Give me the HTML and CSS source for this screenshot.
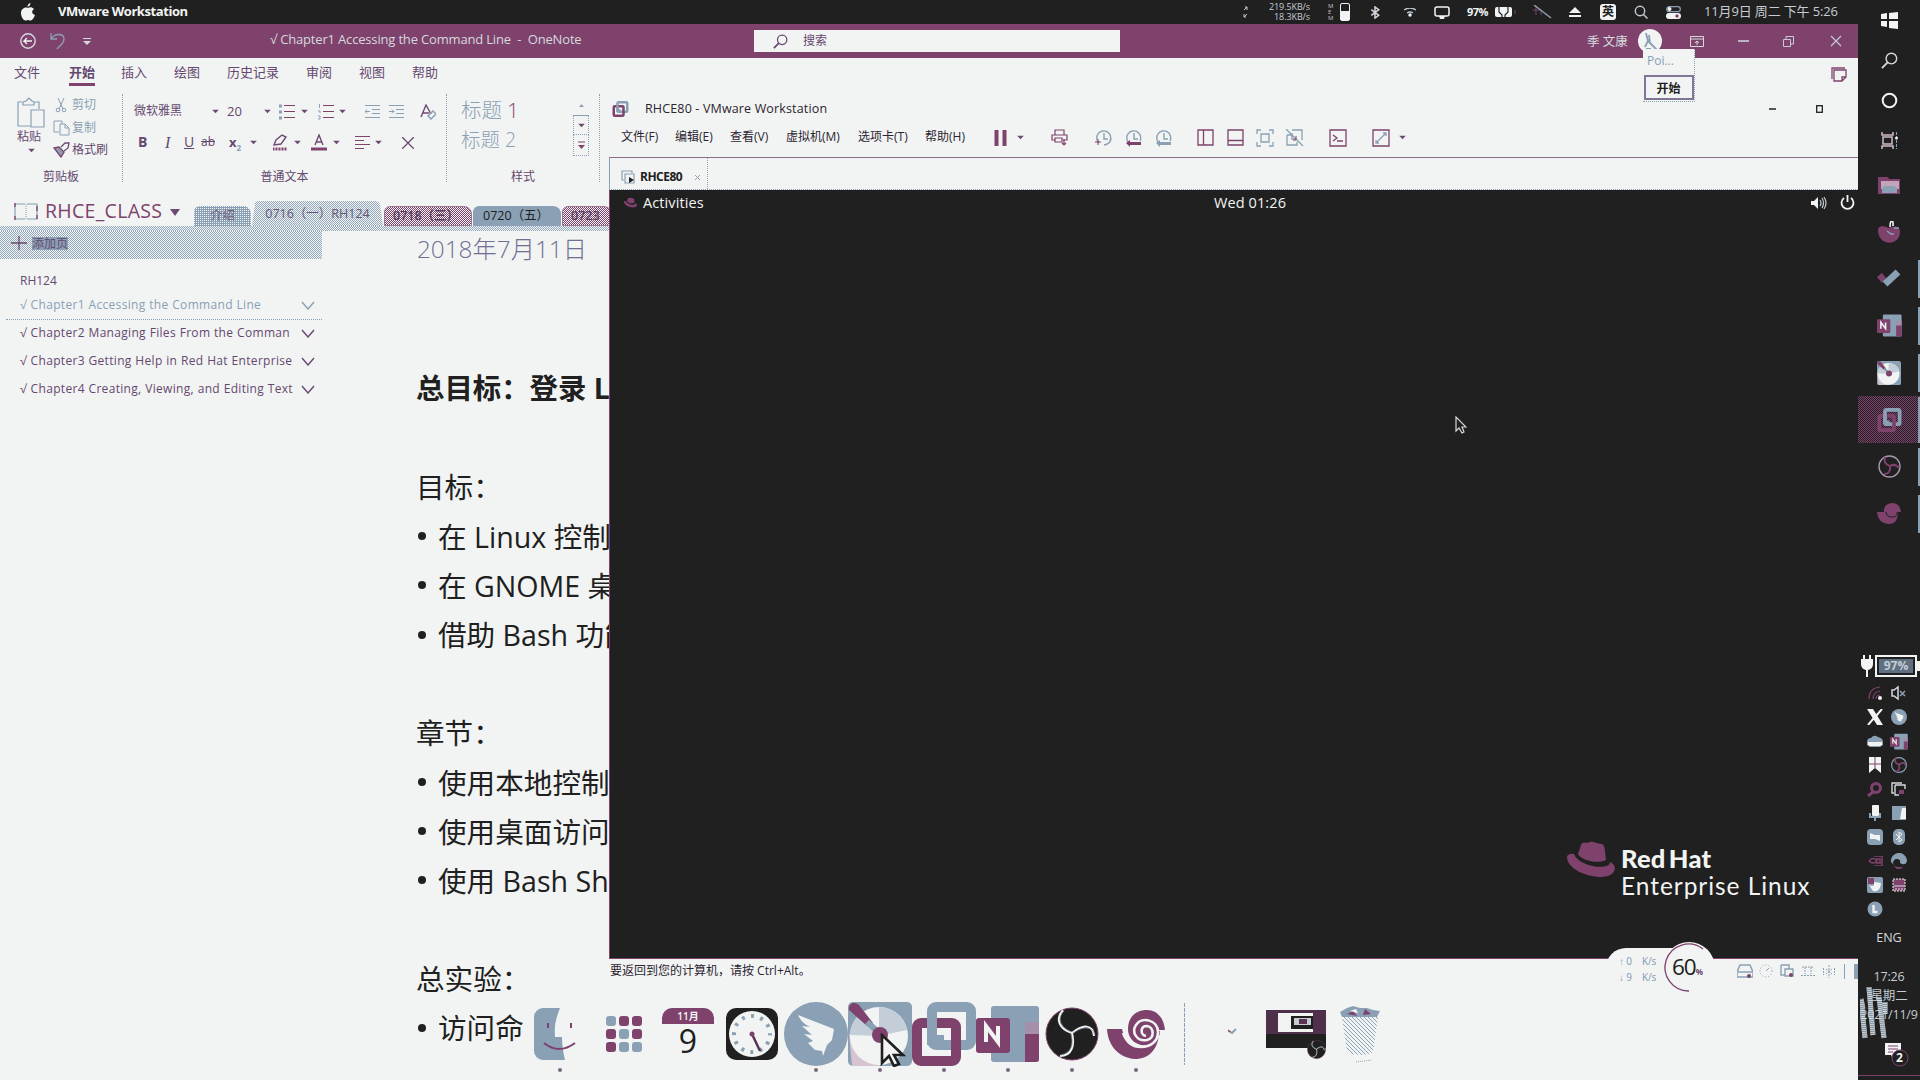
FILE: index.html
```html
<!DOCTYPE html>
<html lang="zh-CN">
<head>
<meta charset="utf-8">
<title>VMware Workstation</title>
<link rel="stylesheet" href="styles.css">
</head>
<body>
<svg class="defs" width="0" height="0">
  <defs>
    <symbol id="chev" viewBox="0 0 8 6"><path d="M0 1h8L4 5z" fill="#6c4a72"/></symbol>
    <symbol id="expand" viewBox="0 0 14 9"><path d="M1 1l6 7 6-7" fill="none" stroke="currentColor" stroke-width="1.4"/></symbol>
    <symbol id="vm" viewBox="0 0 64 64"><rect x="20" y="5" width="39" height="38" rx="4" fill="none" stroke="#8aa0b4" stroke-width="10"/><rect x="5" y="21" width="39" height="38" rx="4" fill="none" stroke="#7e426c" stroke-width="10"/><path d="M20 16v22h12" fill="none" stroke="#8aa0b4" stroke-width="10"/></symbol>
    <symbol id="obs" viewBox="0 0 54 54"><circle cx="27" cy="27" r="26" fill="#202020" stroke="#7e426c" stroke-width="1"/><path d="M18 3C10 12 14 22 27 26M49 29C48 17 38 17 27 26M15 49C27 49 30 38 27 26" fill="none" stroke="#f2f4f3" stroke-width="2"/><path d="M19 4C12 11 15 20 26 25M50 28C47 19 38 19 28 26M16 48C26 46 29 38 26 27" fill="none" stroke="#8aa0b4" stroke-width=".8"/></symbol>
    <symbol id="spiral" viewBox="0 0 60 50"><path d="M1 20h15c2 10 9 18 21 18 10 0 17-8 17-16l-1 0c0 18-10 28-24 28C13 49 2 37 1 20z" fill="#7e426c"/><path d="M22 20C22 7 31 1 41 1c10 0 17 8 18 20h-7c0 10-7 17-17 15-8-2-13-8-13-16z" fill="#7e426c"/><path d="M40 27c-6-1-6-10 1-10 7 1 8 12 0 14-10 2-16-8-11-15 6-9 22-5 22 7 0 10-8 15-17 15-9 0-15-6-18-14" fill="none" stroke="#f2f4f3" stroke-width="2.6"/></symbol>
    <symbol id="onenote" viewBox="0 0 64 58"><rect x="15" y="1" width="48" height="56" rx="3" fill="#8aa0b4"/><path d="M49 17h14v12H49z" fill="#a58fab"/><path d="M49 29h14v25a3 3 0 0 1-3 3H49z" fill="#7e426c"/><rect x="0" y="13" width="34" height="35" rx="3" fill="#7e426c"/><path d="M10 37V21l12 16V21" fill="none" stroke="#f2f4f3" stroke-width="4"/></symbol>
    <symbol id="disc" viewBox="0 0 64 64"><rect width="64" height="64" rx="5" fill="#8aa0b4"/><path d="M1 32h31v32H4z" fill="#d6c3d0"/><circle cx="31" cy="34" r="29" fill="#f2f4f3"/><path d="M31 34L31 5A29 29 0 0 1 59 28zM31 34L12 12A29 29 0 0 0 2 33z" fill="#c3ced8"/><path d="M1 8C0 1 7-1 11 3l14 18-6 3z" fill="#7e426c"/><path d="M19 20l10 9" stroke="#8aa0b4" stroke-width="6"/><circle cx="32" cy="33" r="8" fill="#7e426c"/></symbol>
    <symbol id="hat" viewBox="0 0 48 36"><path d="M11 13l3-9c1-4 5-1 9-3 4-1 6 2 12 2 3 1 3 7 4 16-7 4-25 1-28-6z" fill="#7e426c"/><path d="M7 13c-4-1-7 1-7 3 0 11 18 20 35 20 16-1 15-13 8-15 0 9-31 5-36-8z" fill="#7e426c"/></symbol>
    <symbol id="wing" viewBox="0 0 64 64"><circle cx="32" cy="32" r="32" fill="#8aa0b4"/><path d="M14 13l36 14-2 11-5 5-4 11-1-5-7-1-7-7 5-2-9-7 8 1-10-9 8 1c-6-3-10-7-12-12z" fill="#f2f4f3"/></symbol>
    <symbol id="bt" viewBox="0 0 10 14"><path d="M1 4l8 6-4 3V1l4 3-8 6" fill="none" stroke="currentColor" stroke-width="1.6"/></symbol>
    <symbol id="mag" viewBox="0 0 18 18"><circle cx="11" cy="7" r="5.6" fill="none" stroke="currentColor" stroke-width="1.5"/><path d="M7 11l-6 6" stroke="currentColor" stroke-width="2"/></symbol>
    <symbol id="clk" viewBox="0 0 18 18"><path d="M4 14a7 7 0 1 1 11-2M9 4v6h4" fill="none" stroke="#8aa0b4" stroke-width="1.4"/></symbol>
  </defs>
</svg>

<div class="desktop">
  <main class="screen">
    <header class="menubar">
      <svg width="14" height="18" viewBox="0 0 14 18"><path d="M9.500 0c0 2-1 3-3 4 0-2 1-3.500 3-4zM7 5c2-1 4-1 6 1-3 2-2 5 1 6-1 3-3 6-5 5.500-1.500-.7-2.500-.7-4 0C2 18 0 13 0 10c0-4 4-6.500 7-5z" fill="#f2f4f3"/></svg>
      <strong>VMware Workstation</strong>
      <svg width="8" height="12" viewBox="0 0 8 12"><path d="M2 4l3-3M3 1h2v3M5 8l-3 3M2 8v3h2" stroke="#c5ccd4" fill="none"/></svg>
      <div class="net"><span>219.5KB/s</span><span>18.3KB/s</span></div>
      <div class="mem"><i>M</i><i>E</i><i>M</i></div>
      <svg width="10" height="18"><rect x=".5" y=".5" width="9" height="17" rx="1.500" fill="none" stroke="#f2f4f3"/><rect x="1" y="8" width="8" height="9" fill="#f2f4f3"/></svg>
      <svg class="lt" width="10" height="13"><use href="#bt"/></svg>
      <svg width="12" height="9" viewBox="0 0 12 9"><path d="M0 2q6-4 12 0M3 5q3-2 6 0" stroke="#b9c3ce" stroke-width="1.300" fill="none"/><circle cx="6" cy="7" r="1.700" fill="#f2f4f3"/></svg>
      <svg width="16" height="13" viewBox="0 0 16 13"><rect x="1" y="1" width="14" height="9" rx="2" fill="none" stroke="#f2f4f3" stroke-width="1.500"/><path d="M5 10h6l-1 3H6z" fill="#f2f4f3"/></svg>
      <b class="pct">97%</b>
      <svg width="22" height="12" viewBox="0 0 22 12"><rect x="1" y="1" width="17" height="10" rx="2" fill="#f2f4f3"/><path d="M21 4v4" stroke="#7e426c"/><path d="M5 1v5l3 3v2M14 1v5l-3 3v2" stroke="#202020" stroke-width="1.200" fill="none"/></svg>
      <svg width="20" height="14" viewBox="0 0 20 14"><path d="M1 5h8v5M4 1v9" stroke="#7e426c" fill="none"/><path d="M2 0l17 13" stroke="#8aa0b4" stroke-width="1.500"/></svg>
      <svg width="12" height="10" viewBox="0 0 12 10"><path d="M6 0l6 6H0zM0 8h12v2H0z" fill="#f2f4f3"/></svg>
      <span class="ime">英</span>
      <svg width="14" height="14" viewBox="0 0 14 14"><circle cx="6" cy="6" r="4.700" fill="none" stroke="#c5ccd4" stroke-width="1.400"/><path d="M9.500 9.500l4 4" stroke="#c5ccd4" stroke-width="1.500"/></svg>
      <svg width="15" height="13" viewBox="0 0 15 13"><rect x=".7" y=".7" width="13.600" height="5" rx="2.500" fill="none" stroke="#8aa0b4" stroke-width="1.300"/><circle cx="3.500" cy="3" r="2" fill="#f2f4f3"/><rect y="7" width="15" height="6" rx="3" fill="#f2f4f3"/><circle cx="11" cy="10" r="1.700" fill="#7e426c"/></svg>
      <time>11月9日 周二 下午 5:26</time>
    </header>

    <section class="onenote">
      <div class="titlebar">
        <svg width="18" height="18" viewBox="0 0 18 18"><circle cx="9" cy="9" r="7.200" fill="none" stroke="#d5d9de" stroke-width="1.400"/><path d="M13 9H5l3-3M5 9l3 3" stroke="#f2f4f3" stroke-width="1.300" fill="none"/></svg>
        <svg width="16" height="18" viewBox="0 0 16 18"><path d="M1 1v6h6M1 7c4-6 13-6 13 0 0 5-4 6-7 10" fill="none" stroke="#8aa0b4" stroke-width="1.300"/></svg>
        <svg width="8" height="7" viewBox="0 0 8 7"><path d="M0 .5h8" stroke="#d5d9de"/><path d="M0 3h8L4 7z" fill="#d5d9de"/></svg>
        <span class="wtitle">√ Chapter1 Accessing the Command Line&nbsp; - &nbsp;OneNote</span>
        <div class="search"><svg width="15" height="15"><use href="#mag"/></svg>搜索</div>
        <span class="user">季 文康</span>
        <svg width="24" height="24" viewBox="0 0 24 24"><circle cx="12" cy="12" r="12" fill="#f2f4f3"/><path d="M8 4l2 8-3 6M11 6l1 8M10 12l9 9M8 20h5" stroke="#8aa0b4" stroke-width="1.800" fill="none"/></svg>
        <svg width="14" height="11" viewBox="0 0 14 11"><path d="M.5.500h13v10H.5zM0 3h14M7 9V5M5 7l2-2 2 2" stroke="#d5d9de" fill="none"/></svg>
        <svg width="11" height="2"><path d="M0 1h11" stroke="#d5d9de" stroke-width="1.500"/></svg>
        <svg width="11" height="11" viewBox="0 0 11 11"><path d="M.5 3.500h7v7h-7zM3 3V.5h7.500V8H8" stroke="#c5ccd4" fill="none"/></svg>
        <svg width="12" height="12" viewBox="0 0 12 12"><path d="M1 1l10 10M11 1L1 11" stroke="#c5ccd4" stroke-width="1.200"/></svg>
      </div>
      <nav class="rtabs">
        <span>文件</span><span class="on">开始</span><span>插入</span><span>绘图</span><span>历史记录</span><span>审阅</span><span>视图</span><span>帮助</span>
        <svg width="16" height="15" viewBox="0 0 16 15"><path d="M1 12V1h13M3 3h12v7l-4 4H3zM15 10h-4v4" stroke="#7e426c" fill="none" stroke-width="1.300"/></svg>
      </nav>
      <div class="ribbon">
        <div class="group clip">
          <div class="tools">
            <div class="paste">
              <svg width="28" height="31" viewBox="0 0 28 31"><path d="M5 5H1v24h12M22 12V5h-5M6 8V5l3-1 3-3 3 3 2 1v3zM14 13h13v17H14z" fill="none" stroke="#8aa0b4" stroke-width="1.200"/></svg>
              <span>粘贴</span><svg width="7" height="5"><use href="#chev"/></svg>
            </div>
            <div class="cliplist">
              <span class="off"><svg width="17" height="15" viewBox="0 0 17 15"><path d="M5 0l5 11M11 0L6 11" stroke="#8aa0b4"/><circle cx="5" cy="12" r="1.800" fill="none" stroke="#8aa0b4"/><circle cx="11" cy="12" r="1.800" fill="none" stroke="#8aa0b4"/></svg>剪切</span>
              <span class="off"><svg width="17" height="16" viewBox="0 0 17 16"><path d="M6 12H1V1h8v3M7 4h5l4 4v7H7zM12 4v4h4" stroke="#8aa0b4" fill="none"/></svg>复制</span>
              <span><svg width="17" height="16" viewBox="0 0 17 16"><path d="M1 6l5-1 5 5-3 5z" fill="#8aa0b4" stroke="#7e426c" stroke-width="1.400"/><path d="M8 5l4-4 4-0-1 5-4 3" fill="none" stroke="#6c4a72" stroke-width="1.300"/></svg>格式刷</span>
            </div>
          </div>
          <label>剪贴板</label>
        </div>
        <div class="group font">
          <div class="tools">
            <div class="frow one">
              <span>微软雅黑</span><svg width="7" height="5"><use href="#chev"/></svg><span class="size">20</span><svg width="7" height="5"><use href="#chev"/></svg>
              <svg width="16" height="16" viewBox="0 0 16 16"><path d="M0 2h3M0 8h3M0 14h3" stroke="#8aa0b4" stroke-width="3"/><path d="M5 1.500h11M5 7.500h11M5 13.500h11" stroke="#7e426c"/></svg><svg width="7" height="5"><use href="#chev"/></svg>
              <svg width="16" height="16" viewBox="0 0 16 16"><path d="M1.500 0v4M0 7h2v2M0 12h2v3H0" stroke="#8aa0b4" fill="none"/><path d="M5 1.500h11M5 7.500h11M5 13.500h11" stroke="#7e426c"/></svg><svg width="7" height="5"><use href="#chev"/></svg>
              <svg width="15" height="13" viewBox="0 0 15 13"><path d="M0 .5h15M7 4.500h8M7 8.500h8M0 12.500h15M5 6.500H0l2-2M0 6.500l2 2" stroke="#8aa0b4" fill="none"/></svg>
              <svg width="15" height="13" viewBox="0 0 15 13"><path d="M0 .5h15M7 4.500h8M7 8.500h8M0 12.500h15M0 6.500h5l-2-2M5 6.500l-2 2" stroke="#8aa0b4" fill="none"/></svg>
              <svg width="16" height="16" viewBox="0 0 16 16"><path d="M1 13L6 1l5 9M3 9h6" stroke="#6c4a72" stroke-width="1.400" fill="none"/><path d="M8 12l5-5 3 3-5 5z" fill="none" stroke="#8aa0b4" stroke-width="1.500"/></svg>
            </div>
            <div class="frow two">
              <b>B</b><i>I</i><u>U</u><s>ab</s><span class="sub">x<sub>2</sub></span><svg width="7" height="5"><use href="#chev"/></svg>
              <svg width="16" height="17" viewBox="0 0 16 17"><path d="M2 11l2-5 6-5 4 2-5 7z" fill="none" stroke="#6c4a72" stroke-width="1.400"/><path d="M1 15h14" stroke="#7e426c" stroke-width="3" stroke-dasharray="1 .5"/></svg><svg width="7" height="5"><use href="#chev"/></svg>
              <svg width="16" height="17" viewBox="0 0 16 17"><path d="M4 11L8 1l4 10M5 8h6" fill="none" stroke="#6c4a72" stroke-width="1.400"/><path d="M0 15h16" stroke="#7e426c" stroke-width="3"/></svg><svg width="7" height="5"><use href="#chev"/></svg>
              <svg width="15" height="14" viewBox="0 0 15 14"><path d="M0 .5h15M0 4.500h9M0 8.500h15M0 12.500h9" stroke="#7e426c"/></svg><svg width="7" height="5"><use href="#chev"/></svg>
              <svg width="12" height="12" viewBox="0 0 12 12"><path d="M0 0l12 12M12 0L0 12" stroke="#6c4a72" stroke-width="1.300"/></svg>
            </div>
          </div>
          <label>普通文本</label>
        </div>
        <div class="group styles">
          <div class="tools">
            <div class="names"><span>标题 <em>1</em></span><span class="h2">标题 2</span></div>
            <div class="scroller"><span><svg width="5" height="3" viewBox="0 0 5 3"><path d="M0 3l2.500-3L5 3" fill="#8aa0b4"/></svg></span><span><svg width="7" height="5"><use href="#chev"/></svg></span><span><svg width="7" height="8" viewBox="0 0 7 8"><path d="M0 1h7" stroke="#7e426c"/><path d="M0 4h7L3.500 8z" fill="#7e426c"/></svg></span></div>
          </div>
          <label>样式</label>
        </div>
      </div>
      <div class="notebook">
        <svg width="24" height="19" viewBox="0 0 24 19"><path d="M11 2H1v15h10M13 2h10v15H13" fill="none" stroke="#8aa0b4" stroke-width="1.200"/><path d="M1 1v4M23 4v5M23 13v4M1 14v4" stroke="#7e426c" stroke-width="1.300"/><path d="M12 2v16" stroke="#8aa0b4" stroke-dasharray="1 1"/></svg>
        <span class="nbname">RHCE_CLASS</span>
        <svg width="10" height="8" viewBox="0 0 10 8"><path d="M0 0h10L5 7z" fill="#6c4a72"/></svg>
        <div class="sections">
          <span class="s1">介绍</span><span class="s2">0716（一）RH124</span><span class="s3">0718（三）</span><span class="s4">0720（五）</span><span class="s5">0723</span>
        </div>
      </div>
      <div class="band"></div>
      <div class="body">
        <aside class="pages">
          <div class="addpage"><svg width="16" height="14" viewBox="0 0 16 14"><path d="M8 0v14M0 7h16" stroke="#6c4a72" stroke-width="1.300"/></svg><span>添加页</span></div>
          <h4>RH124</h4>
          <p class="sel"><span>√ Chapter1 Accessing the Command Line</span><svg width="14" height="9"><use href="#expand"/></svg></p>
          <p><span>√ Chapter2 Managing Files From the Comman</span><svg width="14" height="9"><use href="#expand"/></svg></p>
          <p><span>√ Chapter3 Getting Help in Red Hat Enterprise</span><svg width="14" height="9"><use href="#expand"/></svg></p>
          <p><span>√ Chapter4 Creating, Viewing, and Editing Text</span><svg width="14" height="9"><use href="#expand"/></svg></p>
        </aside>
        <article class="note">
          <div class="date">2018年7月11日</div>
          <h2>总目标：登录 L</h2>
          <p class="gap">目标：</p>
          <p class="li">在 Linux 控制</p>
          <p class="li">在 GNOME 桌</p>
          <p class="li">借助 Bash 功能</p>
          <p class="gap">章节：</p>
          <p class="li">使用本地控制</p>
          <p class="li">使用桌面访问</p>
          <p class="li">使用 Bash Sh</p>
          <p class="gap">总实验：</p>
          <p class="li">访问命</p>
        </article>
      </div>
    </section>

    <section class="vmware">
      <div class="vtitle">
        <svg width="17" height="16"><use href="#vm"/></svg><span>RHCE80 - VMware Workstation</span>
        <svg width="7" height="2"><path d="M0 1h7" stroke="#202020" stroke-width="1.500"/></svg>
        <svg width="7" height="8"><rect x=".7" y=".7" width="5.600" height="6.600" fill="none" stroke="#202020" stroke-width="1.300"/></svg>
      </div>
      <div class="vmenu">
        <span>文件(F)</span><span>编辑(E)</span><span>查看(V)</span><span>虚拟机(M)</span><span>选项卡(T)</span><span>帮助(H)</span>
        <svg width="13" height="16"><path d="M2.500 0v16M10.500 0v16" stroke="#7e426c" stroke-width="4"/></svg>
        <svg width="7" height="5"><use href="#chev"/></svg>
        <svg width="17" height="17" viewBox="0 0 17 17"><path d="M4 6V1h9v5M4 11H1V6h15v5h-4M4 9h7v4H4zM13 10v6M11 14l2 2 2-2" fill="none" stroke="#7e426c" stroke-width="1.200"/></svg>
        <svg width="18" height="18" viewBox="0 0 18 18"><use href="#clk" width="18" height="18"/><path d="M0 13h6M3 10v6" stroke="#7e426c"/><path d="M16 10q-1 5-7 6" stroke="#8aa0b4" fill="none" stroke-width="1.300"/></svg>
        <svg width="18" height="18" viewBox="0 0 18 18"><use href="#clk" width="18" height="18"/><path d="M1 14l4-3v2h11v3H5v2z" fill="#7e426c"/></svg>
        <svg width="18" height="18" viewBox="0 0 18 18"><use href="#clk" width="18" height="18"/><path d="M1 14l4-3v2h11v3H5v2z" fill="#8aa0b4"/></svg>
        <svg width="17" height="17"><path d="M1 1h15v15H1zM6.500 1v15" fill="none" stroke="#7e426c" stroke-width="1.300"/></svg>
        <svg width="17" height="17"><path d="M1 1h15v15H1zM1 11.500h15" fill="none" stroke="#7e426c" stroke-width="1.300"/></svg>
        <svg width="18" height="18"><path d="M1 5V1h4M13 1h4v4M17 13v4h-4M5 17H1v-4M5 5h8v8H5z" fill="none" stroke="#8aa0b4" stroke-width="1.300"/></svg>
        <svg width="18" height="18"><path d="M1 6h5M1 6v10h10v-3M6 1h10v10M0 0l17 17M6 4v6h4" fill="none" stroke="#8aa0b4" stroke-width="1.300"/><path d="M10 7v4H7" stroke="#7e426c" fill="none"/></svg>
        <svg width="18" height="18"><path d="M1 1h16v16H1zM4 6l4 3-4 3M8 12h6" fill="none" stroke="#7e426c" stroke-width="1.300"/></svg>
        <svg width="18" height="18"><path d="M1 1h16v16H1z" fill="none" stroke="#7e426c" stroke-width="1.300"/><path d="M4 14L14 4M11 4h3v3M4 11v3h3" fill="none" stroke="#8aa0b4" stroke-width="1.300"/></svg>
        <svg width="7" height="5"><use href="#chev"/></svg>
      </div>
      <div class="vtabs"><div class="vtab"><svg width="14" height="14" viewBox="0 0 14 14"><path d="M3 10H1V1h10v2M4 4h9v9H4z" fill="none" stroke="#8aa0b4" stroke-width="1.200"/><path d="M8 7l5 3-5 3z" fill="#202020"/></svg><b>RHCE80</b><svg width="7" height="7"><path d="M1 1l5 5M6 1L1 6" stroke="#8aa0b4"/></svg></div></div>
      <div class="guest">
        <div class="gnome">
          <svg width="13" height="11"><use href="#hat"/></svg><span>Activities</span><span class="when">Wed 01:26</span>
          <svg width="16" height="14" viewBox="0 0 16 14"><path d="M0 5h3l4-4v12L3 9H0z" fill="#f2f4f3"/><path d="M9 4q2 3 0 6M11 2q3 5 0 10M13 1q4 6 0 12" fill="none" stroke="#c5ccd4" stroke-width="1.200"/></svg>
          <svg width="15" height="15" viewBox="0 0 15 15"><path d="M4 3a6 6 0 1 0 7 0M7.500 0v7" fill="none" stroke="#f2f4f3" stroke-width="1.800"/></svg>
        </div>
        <svg class="pointer" width="12" height="18" viewBox="0 0 12 18"><path d="M1 1v14l3-3 3 5 2-1-2-5h4z" fill="#202020" stroke="#d5d9de" stroke-width="1.200"/></svg>
        <div class="rhel"><svg width="48" height="36"><use href="#hat"/></svg><div><b>Red Hat</b><span>Enterprise Linux</span></div></div>
      </div>
      <div class="vstatus">
        <span>要返回到您的计算机，请按 Ctrl+Alt。</span>
        <svg width="16" height="14" viewBox="0 0 16 14"><path d="M3 1h10l3 7v5H0V8zM1 8h14" fill="none" stroke="#8aa0b4" stroke-width="1.500"/><circle cx="12" cy="12" r="2" fill="#7e426c"/></svg>
        <svg width="14" height="14"><circle cx="7" cy="7" r="6" fill="none" stroke="#8aa0b4" stroke-dasharray="1 2"/><path d="M7 7l3-3" stroke="#8aa0b4"/></svg>
        <svg width="14" height="14"><path d="M1 1h8v4M1 1v10h4M5 5h8v7H5z" fill="none" stroke="#8aa0b4" stroke-width="1.400"/><circle cx="11" cy="11" r="2" fill="#7e426c"/></svg>
        <svg width="14" height="12"><path d="M1 2h12M4 2v7M10 2v7M0 10.500h14" fill="none" stroke="#8aa0b4" stroke-dasharray="2 1"/></svg>
        <svg width="12" height="13"><path d="M6 0v13M3 4l6 5M9 4L3 9M.5 3v7M11.500 3v7" stroke="#8aa0b4" stroke-dasharray="2 1"/></svg>
        <i></i><em></em>
      </div>
    </section>

    <div class="meter">
      <div class="rates"><span>↑ 0</span><span>K/s</span><span>↓ 9</span><span>K/s</span></div>
      <div class="gauge"><svg width="56" height="56"><circle cx="28" cy="28" r="26" fill="#f2f4f3"/><path d="M28 51A23.500 23.500 0 1 1 42 9" fill="none" stroke="#7e426c" stroke-width="1.300"/></svg><b>60<small>%</small></b></div>
    </div>

    <div class="popup"><span>Poi...</span><button>开始</button></div>

    <nav class="dock">
      <div class="app run"><svg width="46" height="52" viewBox="0 0 46 52"><path d="M9 0h17c-4 10-6 18-5 29h7c0 8 1 15 3 23H9a9 9 0 0 1-9-9V9a9 9 0 0 1 9-9z" fill="#8aa0b4"/><path d="M14 15v5M37 15v5" stroke="#7e426c" stroke-width="2"/><path d="M10 35q15 12 31 0" fill="none" stroke="#7e426c" stroke-width="2"/></svg></div>
      <div class="app"><div class="grid"><i></i><i class="p"></i><i class="p"></i><i class="p"></i><i></i><i class="p"></i><i class="p"></i><i></i><i></i></div></div>
      <div class="app"><div class="cal"><span>11月</span><b>9</b></div></div>
      <div class="app"><svg width="52" height="52" viewBox="0 0 52 52"><rect width="52" height="52" rx="10" fill="#202020"/><circle cx="26" cy="26" r="23" fill="#f2f4f3"/><circle cx="26" cy="26" r="18" fill="none" stroke="#8aa0b4" stroke-width="4" stroke-dasharray="3 6.425" stroke-dashoffset="1.500"/><path d="M26 26l8 17" stroke="#5a3552" stroke-width="2.500"/><circle cx="26" cy="26" r="2.500" fill="#7e426c"/></svg></div>
      <div class="app run"><svg width="64" height="64"><use href="#wing"/></svg></div>
      <div class="app run"><svg width="64" height="64"><use href="#disc"/></svg><svg class="cursor" width="26" height="34" viewBox="0 0 26 34"><path d="M2 2v28l7-7 5 10 5-2-5-9h9z" fill="#f2f4f3" stroke="#202020" stroke-width="2.600"/></svg></div>
      <div class="app run"><svg width="64" height="64"><use href="#vm"/></svg></div>
      <div class="app run"><svg width="64" height="58"><use href="#onenote"/></svg></div>
      <div class="app run"><svg width="54" height="54"><use href="#obs"/></svg></div>
      <div class="app run"><svg width="60" height="50"><use href="#spiral"/></svg></div>
      <div class="sep"></div>
      <svg class="tick" width="9" height="7" viewBox="0 0 9 7"><path d="M1 3l3 2 4-4" fill="none" stroke="#8aa0b4" stroke-width="2"/><path d="M0 2l2 2" stroke="#7e426c" stroke-width="1.500"/></svg>
      <svg width="60" height="49" viewBox="0 0 60 49"><rect width="60" height="38" fill="#4e304a"/><path d="M0 24h60v14H0z" fill="#202020"/><rect x="12" y="3" width="35" height="19" fill="#f2f4f3"/><rect x="25" y="6" width="22" height="13" fill="#202020"/><path d="M28 8h17v7H28z" fill="#c5ccd4"/><path d="M33 9h8v5h-8z" fill="#5a3552"/><use href="#obs" x="41" y="30" width="19" height="19"/></svg>
      <svg width="40" height="58" viewBox="0 0 40 58"><path d="M2 12l-2-5 7-4 6-2 7 2 7 0 6 2 7 1-3 6z" fill="#8aa0b4"/><path d="M7 9l6-3 4 5zM23 10l2-6 6 5zM12 1l4 3" fill="#7e426c"/><path d="M10 6l6-2 2 4z" fill="#f2f4f3"/><path d="M2 12h36l-5 35c-6 4-20 4-26 0z" fill="url(#weave)"/><path d="M16 57l16-2" stroke="#8aa0b4" stroke-dasharray="1 1"/><defs><pattern id="weave" width="4" height="4" patternUnits="userSpaceOnUse"><path d="M0 0h1v1H0zM2 2h1v1H2zM1 1h1v1H1zM3 3h1v1H3z" fill="#8aa0b4"/></pattern></defs></svg>
    </nav>
  </main>

  <aside class="taskbar">
    <div class="tb"><svg width="17" height="17" viewBox="0 0 17 17"><path d="M0 2l6-1v6H0zM8 1l9-1v7H8zM0 9h6v6l-6-1zM8 9h9v8l-9-1z" fill="#f2f4f3"/></svg></div>
    <div class="tb lt"><svg width="17" height="17"><use href="#mag"/></svg></div>
    <div class="tb"><svg width="17" height="17"><circle cx="8.500" cy="8.500" r="6.800" fill="none" stroke="#f2f4f3" stroke-width="2"/></svg></div>
    <div class="tb"><svg width="17" height="17" viewBox="0 0 17 17"><path d="M1 0v3h11V0M1 17v-3h11v3M2 5h9v7H2z" fill="none" stroke="#d0bccb" stroke-width="1.500"/><path d="M15.500 0v17" stroke="#8aa0b4" stroke-dasharray="3 1"/><circle cx="15.500" cy="6" r="1.500" fill="#f2f4f3"/></svg></div>
    <div class="tb big"><svg width="22" height="18" viewBox="0 0 22 18"><path d="M0 1h10l1 2h11v15H0z" fill="#7e426c"/><path d="M3 5h18v8H3z" fill="#c3a5b9"/><path d="M4 17v-5l3-2h9l3 2v5z" fill="#8aa0b4"/></svg></div>
    <div class="tb big"><svg width="22" height="22" viewBox="0 0 22 22"><path d="M0 9c0-4 4-5 11-2 7-3 11-1 11 4 0 14-22 15-22-2z" fill="#7e426c"/><path d="M12 6q0-8 3-5v4" fill="none" stroke="#f2f4f3" stroke-width="1.600"/><path d="M9 10l4 3h3M16 7h5" fill="none" stroke="#8aa0b4" stroke-width="1.400"/></svg></div>
    <div class="tb big on"><svg width="24" height="20" viewBox="0 0 24 20"><path d="M0 8l5-4 4 5-4 5z" fill="#7e426c"/><path d="M8 15L21 3" stroke="#8aa0b4" stroke-width="7"/></svg></div>
    <div class="tb big on"><svg width="25" height="23"><use href="#onenote"/></svg></div>
    <div class="tb big on"><svg width="24" height="24"><use href="#disc"/></svg></div>
    <div class="tb big on active"><svg width="25" height="24"><use href="#vm"/></svg></div>
    <div class="tb big on"><svg width="23" height="23" viewBox="0 0 23 23"><circle cx="11.500" cy="11.500" r="10.500" fill="none" stroke="#a596ad" stroke-width="1.400"/><path d="M7 2q-2 7 5 9M21 13q-4-5-9-2M6 19q7 0 6-8" fill="none" stroke="#7e426c" stroke-width="2"/></svg></div>
    <div class="tb big on"><svg width="24" height="21" viewBox="0 0 24 21"><path d="M0 9h7q-1-8 8-9 8 0 9 9h-3q0 11-8 12Q1 21 0 9z" fill="#7e426c"/><path d="M9 9q1 6 7 5 5-1 4-5" fill="none" stroke="#202020"/></svg></div>
    <div class="power"><svg width="12" height="22" viewBox="0 0 12 22"><path d="M2 0h2v4h4V0h2v4h2v5q0 5-5 6v7H5v-7Q0 14 0 9V4h2z" fill="#f2f4f3"/></svg><span>97%</span></div>
    <div class="tray">
      <svg width="16" height="16" viewBox="0 0 16 16"><path d="M2 14Q2 3 13 2M6 14q0-7 7-8M9 14q0-4 4-4" fill="none" stroke="#7e426c" stroke-width="1.200"/><circle cx="13" cy="13" r="2" fill="#f2f4f3"/></svg>
      <svg width="16" height="16" viewBox="0 0 16 16"><path d="M1 5h2l4-3v12l-4-3H1z" fill="none" stroke="#d5d9de" stroke-width="1.500"/><path d="M9 6l5 5M14 6l-5 5" stroke="#8aa0b4" stroke-width="1.500"/></svg>
      <svg width="16" height="16" viewBox="0 0 16 16"><path d="M0 0h6l10 16h-6z" fill="#f2f4f3"/><path d="M15 0L9 7M7 9l-6 7" stroke="#f2f4f3" stroke-width="2"/></svg>
      <svg width="16" height="16"><use href="#wing"/></svg>
      <svg width="16" height="12" viewBox="0 0 16 12"><path d="M0 7q0-4 4-4 3-4 7-1 5 1 5 5v3l-3 2H3l-3-2z" fill="#8aa0b4"/><path d="M1 7h14v3l-2 1H3l-2-1z" fill="#f2f4f3"/></svg>
      <svg width="18" height="17"><use href="#onenote"/></svg>
      <svg width="14" height="16" viewBox="0 0 14 16"><path d="M1 0h12v16l-6-5-6 5z" fill="#f2f4f3"/><path d="M7 0v11M1 7h12" stroke="#7e426c"/></svg>
      <svg width="16" height="16" viewBox="0 0 54 54"><circle cx="27" cy="27" r="25" fill="none" stroke="#8aa0b4" stroke-width="4"/><path d="M18 3C10 12 14 22 27 26M49 29C48 17 38 17 27 26M15 49C27 49 30 38 27 26" fill="none" stroke="#7e426c" stroke-width="6"/></svg>
      <svg width="16" height="15" viewBox="0 0 16 15"><circle cx="9" cy="6" r="4.500" fill="none" stroke="#7e426c" stroke-width="3"/><path d="M6 10l-5 4" stroke="#7e426c" stroke-width="3"/></svg>
      <svg width="16" height="15" viewBox="0 0 16 15"><path d="M3 11H1V1h10M4 3h10v4M4 3v10h4" fill="none" stroke="#d5d9de" stroke-width="1.400"/><path d="M8 8h5v4H8z" fill="#7e426c"/></svg>
      <svg width="12" height="16" viewBox="0 0 12 16"><rect x="3" width="7" height="11" rx="1" fill="#f2f4f3"/><path d="M1 8v4h10V8M6 12v4" fill="none" stroke="#8aa0b4" stroke-width="2"/></svg>
      <svg width="14" height="14"><rect width="14" height="14" fill="#8aa0b4"/><path d="M10 2h4v11H8z" fill="#f2f4f3"/></svg>
      <svg width="16" height="16"><rect width="16" height="16" rx="4" fill="#8aa0b4"/><path d="M3 4l5 2h5v6L8 10H3z" fill="#f2f4f3"/></svg>
      <svg width="12" height="16" viewBox="0 0 12 16"><rect width="12" height="16" rx="5" fill="#8aa0b4"/><path d="M3 5l6 6-3 2V3l3 2-6 6" fill="none" stroke="#f2f4f3"/></svg>
      <svg width="15" height="10" viewBox="0 0 15 10"><path d="M1 5q4-5 8 0-4 4-8 0M6 0h8v10H6M8 3h4v4H8" fill="none" stroke="#7e426c" stroke-width="1.500"/></svg>
      <svg width="16" height="16" viewBox="0 0 16 16"><path d="M0 9a8 8 0 0 1 16-2q0 5-5 4l-2-1q1-4-3-4-4 0-4 5z" fill="#8aa0b4"/><path d="M2 8q-2 7 10 6-2 3-6 2-4-3-4-8z" fill="#7e426c"/></svg>
      <svg width="16" height="16"><rect width="16" height="16" rx="2" fill="#8aa0b4"/><path d="M2 8q6 3 5-3l7 1q-1 10-8 8z" fill="#f2f4f3"/><path d="M1 1h6v6H1z" fill="#7e426c"/></svg>
      <svg width="14" height="14"><path d="M1 1h12v12H1z" fill="#7e426c" stroke="#f2f4f3" stroke-dasharray="2 1"/><path d="M2 8h10M4 10v2M7 10v2M10 10v2" stroke="#d5d9de"/></svg>
      <svg width="16" height="16"><circle cx="8" cy="8" r="7.500" fill="#8aa0b4"/><path d="M6.500 4v7h4" fill="none" stroke="#f2f4f3" stroke-width="2.300"/></svg>
    </div>
    <span class="lang">ENG</span>
    <div class="clock"><span>17:26</span><span>星期二</span><span>2021/11/9</span>
      <svg width="30" height="52" viewBox="0 0 30 52"><path d="M1 12l2 10M2 22l3 29M9 0l4 48M19 10l5 41M25 15v12" stroke="#f2f4f3" stroke-width="5"/><path d="M1 12l2 10M2 22l3 29M9 0l4 48M19 10l5 41M25 15v12" stroke="#8aa0b4" stroke-width="5" stroke-dasharray="1 1"/></svg>
    </div>
    <div class="bell"><svg width="26" height="26" viewBox="0 0 26 26"><path d="M0 1h16v12h-4l-4 4-2-4H0z" fill="#f2f4f3"/><path d="M3 4h10M3 7h10M3 10h5" stroke="#7e426c"/><circle cx="15" cy="16" r="8" fill="#202020" stroke="#7e426c"/></svg><b>2</b></div>
    <div class="edge"></div>
  </aside>
</div>
</body>
</html>
```
FILE: styles.css
```css
* { box-sizing: border-box; }
:root {
  --ink: #202020;
  --paper: #f2f4f3;
  --plum: #7e426c;
  --steel: #8aa0b4;
  --text: #65486f;
  --weave: conic-gradient(#93a8ba 25%, #f2f4f3 0 50%, #93a8ba 0 75%, #f2f4f3 0) 0 0/2px 2px;
}
body { margin: 0; width: 1920px; height: 1080px; overflow: hidden; background: var(--ink); color: var(--ink); font: 12px/1.2 "Open Sans", "Noto Sans CJK SC", sans-serif; white-space: nowrap; }
svg { display: block; flex: none; }
.defs { position: absolute; }
p, h2, h4 { margin: 0; font-weight: 400; }
.lt { color: #d5d9de; }
.desktop { display: grid; grid-template-columns: 1858px 62px; height: 1080px; }
.screen { position: relative; background: var(--paper); overflow: hidden; height: 1080px; }

.menubar { display: grid; grid-template-columns: 37px 1184px 21px 65px 12px 30px 34px 30px 33px 27px 38px 37px 31px 34px 32px 38px 150px; padding-left: 21px; height: 24px; align-items: center; background: var(--ink); color: var(--paper); }
.menubar strong { font-size: 13px; letter-spacing: -.43px; }
.net { display: flex; flex-direction: column; align-items: flex-end; width: 47px; font-size: 9px; line-height: 10px; color: #c5ccd4; letter-spacing: -.1px; }
.mem { display: flex; flex-direction: column; font-size: 6px; line-height: 6px; color: #d0bccb; }
.mem i { font-style: normal; }
.pct { font-size: 11px; letter-spacing: -.5px; }
.ime { width: 16px; height: 16px; border-radius: 3px; background: var(--paper); color: var(--ink); font-size: 12px; line-height: 15px; text-align: center; font-weight: 700; }
.menubar time { font-size: 13px; color: #c5ccd4; letter-spacing: -.15px; }

.titlebar { display: grid; grid-template-columns: 31px 33px 187px 484px 833px 51px 52px 48px 45px 47px 20px; padding-left: 19px; height: 34px; align-items: center; background: var(--plum); color: #d5d9de; }
.wtitle { font-size: 13px; letter-spacing: -.17px; margin-top: -3px; }
.search { display: flex; align-items: center; gap: 15px; width: 366px; height: 22px; padding-left: 19px; background: var(--paper); color: var(--text); }
.user { font-size: 12.500px; }
.rtabs { display: grid; grid-template-columns: 55px 52px 53px 53px 79px 53px 53px 1419px 20px; height: 32px; padding-left: 14px; color: var(--text); font-size: 13px; }
.rtabs span { justify-self: start; line-height: 26px; height: 29px; margin-top: 1px; }
.rtabs svg { margin-top: 9px; }
.rtabs .on { font-weight: 700; border-bottom: 3px solid var(--plum); height: 27px; }

.ribbon { display: flex; height: 102px; padding-top: 4px; color: var(--text); }
.group { height: 88px; display: flex; flex-direction: column; border-right: 1px dotted var(--steel); }
.group label { text-align: center; line-height: 16px; }
.tools { height: 75px; flex: none; }
.clip { width: 123px; }
.font { width: 324px; }
.styles { width: 153px; }
.clip .tools { display: flex; padding-left: 17px; gap: 8px; }
.paste { display: flex; flex-direction: column; align-items: center; padding-top: 3px; width: 28px; gap: 1px; }
.paste span { margin-left: -4px; line-height: 16px; }
.paste span + svg { margin-top: 2px; }
.cliplist { display: flex; flex-direction: column; }
.cliplist span { display: flex; gap: 2px; align-items: center; height: 22.500px; }
.cliplist .off { color: var(--steel); }
.frow { display: grid; align-items: center; padding-left: 11px; }
.frow.one { grid-template-columns: 78px 15px 37px 15px 22px 17px 21px 26px 24px 31px 18px; height: 33px; padding-top: 2px; }
.frow.two { grid-template-columns: 24px 22px 17px 28px 21px 22px 22px 17px 22px 22px 20px 27px 12px; padding-left: 15px; font-size: 14px; height: 31px; }
.size { font-size: 13px; }
.frow i { font-family: "Liberation Serif", serif; font-size: 16px; padding-left: 3px; }
.frow s { font-size: 12px; }
.sub { font-weight: 700; font-size: 13px; }
.sub sub { font-size: 8px; color: var(--steel); line-height: 0; }
.styles .tools { display: flex; padding: 0 10px 0 14px; justify-content: space-between; }
.names { color: var(--steel); font-size: 20.500px; font-weight: 300; display: flex; flex-direction: column; padding-top: 1px; }
.names span { line-height: 30px; }
.names .h2 { font-size: 19.500px; }
.names em { font-style: normal; color: var(--plum); }
.scroller { width: 16px; }
.scroller span { display: flex; height: 20px; align-items: center; justify-content: center; border: 1px dotted var(--steel); margin-bottom: -1px; }
.scroller span:first-child { border-color: transparent; height: 22px; }
.scroller span:nth-child(2) { border-top-style: solid; }
.scroller span:last-child { height: 22px; }

.notebook { display: flex; height: 34px; padding-left: 14px; align-items: flex-end; }
.notebook > svg:first-child { margin-bottom: 5px; }
.nbname { width: 125px; margin-left: 7px; font-size: 19.500px; color: var(--plum); line-height: 30px; letter-spacing: .3px; }
.nbname + svg { margin-bottom: 9px; margin-right: 14px; }
.sections { display: flex; align-items: flex-end; width: 415px; overflow: hidden; gap: 1px; }
.sections span { flex: none; height: 20px; border-radius: 6px 8px 0 0; text-align: center; font-size: 12.500px; line-height: 20px; color: #55405f; }
.sections .s1 { width: 57px; background: conic-gradient(#8aa0b4 75%, #f2f4f3 0) 0 0/2px 2px; color: #6c5d80; }
.sections .s2 { width: 131px; height: 25px; line-height: 25px; background: var(--weave); clip-path: polygon(4px 0, 125px 0, 128px 3px, 131px 25px, 0 25px, 3px 2px); color: #66587d; }
.sections .s3, .sections .s5 { background: conic-gradient(#7e426c 25%, #f2f4f3 0 50%, #7e426c 0 75%, #f2f4f3 0) 0 0/2px 2px; border: 1px solid #9d7691; font-weight: 600; text-align: left; padding-left: 8px; line-height: 18px; }
.sections .s3 { width: 88px; }
.sections .s4 { width: 88px; background: var(--steel); color: var(--ink); text-align: left; padding-left: 10px; }
.sections .s5 { width: 50px; }
.band { height: 5px; width: 609px; background: var(--weave); }

.body { display: grid; grid-template-columns: 322px 287px; height: 849px; }
.pages { color: var(--text); }
.addpage { height: 28px; display: flex; align-items: center; gap: 5px; padding: 0 0 4px 11px; background: var(--weave); }
.addpage span { background: var(--steel); line-height: 13px; }
.pages h4 { height: 34px; padding: 11px 0 0 20px; line-height: 22px; }
.pages p { display: flex; justify-content: space-between; align-items: center; height: 28px; padding: 0 7px 0 20px; letter-spacing: .31px; word-spacing: .3px; }
.pages p.sel { color: var(--steel); margin: 0 0 -1px 6px; padding-left: 14px; padding-bottom: 1px; border-bottom: 1px dotted var(--steel); height: 27px; }
.note { padding-left: 94px; overflow: hidden; font-size: 28.600px; line-height: 49.200px; }
.date { height: 133px; font-size: 24.300px; line-height: 36px; color: #6f6f92; font-weight: 300; padding-left: 1px; }
.note h2 { font-size: 28.400px; font-weight: 700; line-height: 49.200px; }
.note p { height: 49.200px; }
.note .gap { margin-top: 49.200px; }
.note .li { display: flex; align-items: center; gap: 12px; }
.note .li::before { content: ""; width: 8px; height: 8px; border-radius: 50%; background: var(--ink); margin-left: 2px; flex: none; }

.vmware { position: absolute; left: 609px; top: 92px; width: 1249px; height: 893px; background: var(--paper); color: #2b2430; }
.vtitle { display: grid; grid-template-columns: 33px 1124px 47px 20px; padding-left: 3px; height: 33px; align-items: center; font-size: 12.500px; letter-spacing: .15px; }
.vmenu { display: grid; grid-template-columns: 54px 55px 56px 72px 67px 69px 23px 34px 44px 30px 30px 42px 30px 29px 30px 43px 43px 27px 8px; padding: 0 0 8px 12px; height: 33px; align-items: center; }
.vtabs { height: 33px; margin-top: -1px; border-top: 1px solid #8a6f8c; border-bottom: 1px dotted var(--steel); }
.vtab { width: 99px; height: 31px; display: flex; align-items: center; gap: 5px; padding: 7px 0 0 11px; border-left: 1px solid var(--steel); border-right: 1px dotted var(--steel); }
.vtab b { width: 49px; letter-spacing: -.5px; color: var(--ink); }
.guest { position: relative; height: 769px; background: var(--ink); border-left: 1px solid var(--plum); border-bottom: 1px solid var(--plum); color: var(--paper); }
.gnome { display: grid; grid-template-columns: 19px 571px 597px 29px 15px; padding-left: 14px; height: 25px; align-items: center; font-size: 14.500px; letter-spacing: .1px; }
.pointer { position: absolute; left: 845px; top: 226px; }
.rhel { display: flex; gap: 6px; position: absolute; left: 957px; top: 651px; }
.rhel div { display: flex; flex-direction: column; font: 24.500px/27px Lato, sans-serif; padding-top: 4px; }
.rhel b { font-size: 25.500px; font-weight: 900; letter-spacing: .2px; word-spacing: -3px; }
.rhel span { letter-spacing: .95px; }
.vstatus { display: grid; grid-template-columns: 1127px 22px 21px 21px 22px 21px 10px 4px; padding-left: 1px; height: 24px; align-items: center; font-size: 12px; }
.vstatus i { width: 1px; height: 15px; background: var(--steel); }
.vstatus em { width: 4px; height: 15px; background: var(--steel); }

.meter { position: absolute; left: 1606px; top: 940px; width: 112px; height: 56px; }
.rates { display: grid; grid-template-columns: 23px 20px; width: 80px; height: 37px; margin-top: 8px; padding: 6px 0 0 13px; border-radius: 20px 0 0 0; background: var(--paper); color: var(--steel); font: 10px/14px "Noto Sans", sans-serif; letter-spacing: -.2px; }
.gauge { position: absolute; left: 55px; top: 0; width: 56px; height: 56px; }
.gauge b { position: absolute; left: 11px; top: 13px; font-size: 22.500px; line-height: 28px; font-weight: 400; letter-spacing: -1px; }
.gauge small { font-size: 8px; color: var(--text); font-weight: 700; }

.popup { position: absolute; left: 1643px; top: 49px; width: 52px; height: 53px; background: var(--paper); border-right: 1px dotted var(--steel); border-bottom: 1px dotted var(--steel); display: flex; flex-direction: column; align-items: center; }
.popup span { align-self: flex-start; padding-left: 4px; line-height: 23px; height: 26px; color: var(--steel); font-size: 12px; }
.popup button { width: 50px; height: 25px; border: 2px solid #7f7795; background: var(--paper); font: 700 12px/20px "Noto Sans CJK SC", sans-serif; padding: 0; color: var(--ink); }

.dock { position: absolute; left: 528px; top: 1002px; display: flex; align-items: center; height: 64px; }
.app { position: relative; width: 64px; height: 64px; display: flex; align-items: center; justify-content: center; }
.app:first-child { padding-right: 6px; }
.run::after { content: ""; position: absolute; left: 30px; top: 66px; width: 4px; height: 4px; border-radius: 50%; background: #7d6585; }
.grid { display: grid; grid-template-columns: repeat(3, 10px); gap: 3px; }
.grid i { width: 10px; height: 10px; border-radius: 3px; background: var(--steel); }
.grid .p { background: var(--plum); }
.cal { width: 52px; height: 52px; border-radius: 10px; overflow: hidden; text-align: center; display: flex; flex-direction: column; }
.cal span { background: var(--plum); color: var(--paper); font-size: 10px; line-height: 16px; font-weight: 600; }
.cal b { font-size: 32px; line-height: 34px; font-weight: 400; }
.cursor { position: absolute; left: 32px; top: 31px; }
.sep { width: 1px; height: 62px; margin: 0 43px 0 16px; background: repeating-linear-gradient(#8aa0b4 0 4px, transparent 4px 5px); }
.tick { margin: -5px 29px 0 0; }
.dock > svg:last-child { margin-left: 14px; }

.taskbar { position: relative; background: var(--ink); color: #d5d9de; display: flex; flex-direction: column; align-items: center; height: 1080px; overflow: hidden; }
.tb { width: 62px; height: 40px; display: flex; align-items: center; justify-content: center; flex: none; }
.tb:nth-child(4) { padding-bottom: 1px; height: 41px; }
.tb.big { height: 47px; }
.tb.on { background: linear-gradient(#8aa0b4, #8aa0b4) 60px 50%/2px 38px no-repeat; }
.tb.active { background: linear-gradient(#8aa0b4, #8aa0b4) 60px 50%/2px 46px no-repeat, conic-gradient(#7e426c 25%, #202020 0 50%, #7e426c 0 75%, #202020 0) 0 0/2px 2px; }
.power { display: flex; gap: 2px; width: 62px; padding-left: 3px; margin-top: 118px; height: 22px; flex: none; }
.power span { width: 42px; height: 22px; border: 2px solid var(--paper); background: linear-gradient(#5f7080, #5f7080) center/34px 14px no-repeat; color: #c5ccd4; font-size: 12px; line-height: 17px; text-align: center; font-weight: 700; flex: none; }
.power::after { content: ""; width: 3px; height: 10px; background: var(--paper); margin: 6px 0 0 -2px; }
.tray { display: grid; grid-template-columns: 24px 24px; grid-auto-rows: 24px; place-items: center; margin: 4px 4px 0 0; flex: none; }
.lang { margin-top: 10px; line-height: 14px; font-size: 12.500px; }
.clock { position: relative; display: flex; flex-direction: column; align-items: center; margin-top: 22px; line-height: 19px; font-size: 12.500px; color: #c5ccd4; letter-spacing: -.2px; }
.clock svg { position: absolute; left: 0; top: 20px; opacity: .85; }
.bell { position: relative; margin: 18px 0 0 18px; width: 26px; height: 26px; }
.bell b { position: absolute; left: 11px; top: 8px; font-size: 12px; line-height: 16px; color: var(--paper); }
.edge { position: absolute; left: 0; bottom: 4px; width: 62px; height: 1px; background: var(--plum); }
```
